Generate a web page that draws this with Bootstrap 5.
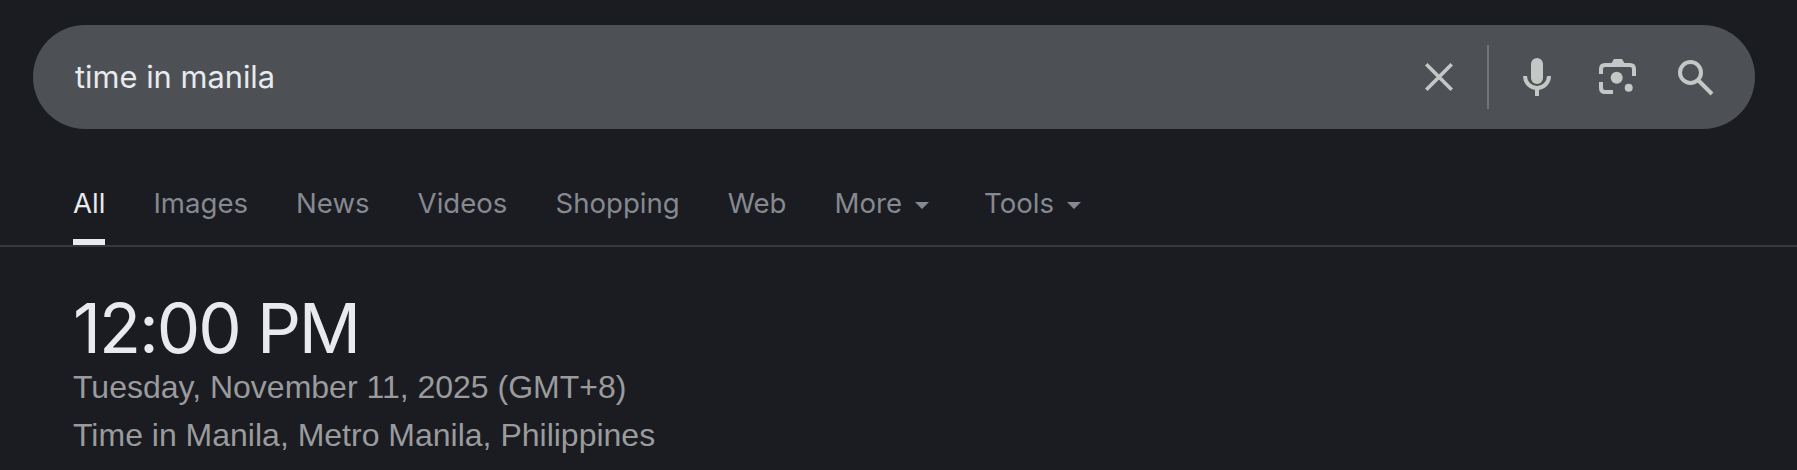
<!DOCTYPE html>
<html lang="en">
    <head>
        <meta charset="UTF-8">
        <meta name="viewport" content="width=device-width, initial-scale=1.0">
        <title>time in manila</title>
        <link href="https://cdn.jsdelivr.net/npm/bootstrap@5.3.3/dist/css/bootstrap.min.css" rel="stylesheet">
        <script src="https://cdn.jsdelivr.net/npm/bootstrap@5.3.3/dist/js/bootstrap.bundle.min.js"></script>

        <style>
            html, body {
                height: 100%;
                overflow: hidden;
            }
            body {
                background: #1b1c21;
                font-family: Inter, "Liberation Sans", sans-serif;
            }
            .search-pill {
                height: 104px;
                margin: 25px 42px 0 33px;
                padding-left: 42px;
                padding-right: 41px;
                background: #4d5156;
                border-radius: 52px;
            }
            .search-text {
                color: #e8eaed;
                font-size: 30.8px;
                line-height: 40px;
                margin-top: -1px;
            }
            .search-sep {
                width: 2px;
                height: 64px;
                background: #70757a;
                margin: 0 29px 0 30px;
            }
            .icon-mic {
                margin-right: 42px;
            }
            .icon-lens {
                margin-right: 40px;
            }
            .tab-row {
                height: 118px;
                padding-left: 73px;
                border-bottom: 2px solid #36383c;
                gap: 48px;
            }
            .tab-item {
                color: #858990;
                font-size: 27.6px;
                line-height: 36px;
                padding-bottom: 18px;
                border-bottom: 6px solid transparent;
                text-decoration: none;
            }
            .tab-item.on {
                color: #e8eaed;
                border-bottom-color: #e8eaed;
            }
            .tab-tools {
                margin-left: 7px;
            }
            .tab-caret {
                display: inline-block;
                width: 0;
                height: 0;
                margin-left: 13px;
                vertical-align: middle;
                border-top: 7px solid #858990;
                border-left: 7px solid transparent;
                border-right: 7px solid transparent;
            }
            .time-block {
                padding-left: 73px;
                padding-top: 46px;
            }
            .time-big {
                color: #e8eaed;
                font-size: 69px;
                line-height: 70px;
                letter-spacing: -2.1px;
            }
            .time-sub {
                color: #9a9b9d;
                font-family: "Liberation Sans", Arial, sans-serif;
                font-size: 32px;
                line-height: 48px;
            }
        </style>
    </head>
    <body class="m-0">
        <div class="search-pill d-flex align-items-center">
            <div class="search-text flex-grow-1">time in manila</div>
            <svg width="36" height="36" viewBox="0 0 36 36" fill="none" stroke="#c4c7c5" stroke-width="3.6"><path d="M5.3 5.3 L30.7 30.7 M30.7 5.3 L5.3 30.7"/></svg>
            <div class="search-sep"></div>
            <svg class="icon-mic" width="38" height="40" viewBox="0 0 38 40">
                <rect x="13" y="1" width="12" height="26" rx="6" fill="#c4c7c5"/>
                <path d="M7 19 A12 12 0 0 0 31 19" fill="none" stroke="#c4c7c5" stroke-width="4"/>
                <rect x="17" y="31" width="4" height="8" fill="#c4c7c5"/>
            </svg>
            <svg class="icon-lens" width="38" height="38" viewBox="0 0 38 38" fill="none" stroke="#c4c7c5" stroke-width="4">
                <path d="M3 16 V11 Q3 7 7 7 H32 Q36 7 36 11 V18"/>
                <path d="M3 24 V30 Q3 34 7 34 H15"/>
                <path d="M13 6 L16 1 H24 L27 6 Z" fill="#c4c7c5" stroke="none"/>
                <circle cx="18.7" cy="19.7" r="6" fill="#c4c7c5" stroke="none"/>
                <circle cx="30.7" cy="29.7" r="4" fill="#c4c7c5" stroke="none"/>
            </svg>
            <svg width="38" height="38" viewBox="0 0 38 38" fill="none" stroke="#c4c7c5" stroke-width="4">
                <circle cx="14.5" cy="14.5" r="10.5"/>
                <path d="M22.5 22.5 L36 36"/>
            </svg>
        </div>

        <nav class="tab-row d-flex align-items-end">
            <a class="tab-item on" href="#">All</a>
            <a class="tab-item" href="#">Images</a>
            <a class="tab-item" href="#">News</a>
            <a class="tab-item" href="#">Videos</a>
            <a class="tab-item" href="#">Shopping</a>
            <a class="tab-item" href="#">Web</a>
            <a class="tab-item" href="#">More<span class="tab-caret"></span></a>
            <a class="tab-item tab-tools" href="#">Tools<span class="tab-caret"></span></a>
        </nav>

        <div class="time-block">
            <div class="time-big">12:00 PM</div>
            <div class="time-sub">Tuesday, November 11, 2025 (GMT+8)</div>
            <div class="time-sub">Time in Manila, Metro Manila, Philippines</div>
        </div>
    </body>
</html>
